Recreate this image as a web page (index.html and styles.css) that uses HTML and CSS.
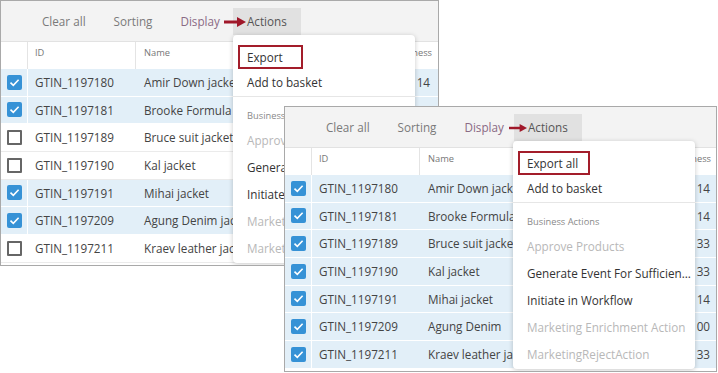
FILE: index.html
```html
<!DOCTYPE html>
<html>
  <head>
    <title>Actions menu - export</title>
    <link rel="stylesheet" href="styles.css">
  </head>
  <body>
    <div class="canvas">

      <!-- first capture: a few rows selected, "Export" -->
      <div class="shot shot-back">
        <div class="toolbar">
          <span class="tool">Clear all</span>
          <span class="tool">Sorting</span>
          <span class="tool tool-display">Display</span>
          <span class="tool tool-active">
            <svg class="pointer" viewBox="0 0 22 10"><path d="M0 5H15" stroke="#a0182a" stroke-width="3"/><path d="M13 0L22 5L13 10Z" fill="#a0182a"/></svg>
            Actions
          </span>
        </div>
        <div class="grid">
          <div class="row row-head">
            <div class="cell"></div>
            <div class="cell cell-id">ID</div>
            <div class="cell">Name</div>
            <div class="cell cell-num">Completeness</div>
          </div>
          <div class="row row-sel">
            <div class="cell cell-check"><span class="check check-on"><svg viewBox="0 0 15 15"><path d="M3.5 7.6L6.3 10.3L11.6 4.8"/></svg></span></div>
            <div class="cell cell-id">GTIN_1197180</div>
            <div class="cell">Amir Down jacket</div>
            <div class="cell cell-num">14</div>
          </div>
          <div class="row row-sel">
            <div class="cell cell-check"><span class="check check-on"><svg viewBox="0 0 15 15"><path d="M3.5 7.6L6.3 10.3L11.6 4.8"/></svg></span></div>
            <div class="cell cell-id">GTIN_1197181</div>
            <div class="cell">Brooke Formula Ice jacket</div>
            <div class="cell cell-num">14</div>
          </div>
          <div class="row">
            <div class="cell cell-check"><span class="check"></span></div>
            <div class="cell cell-id">GTIN_1197189</div>
            <div class="cell">Bruce suit jacket</div>
            <div class="cell cell-num">33</div>
          </div>
          <div class="row">
            <div class="cell cell-check"><span class="check"></span></div>
            <div class="cell cell-id">GTIN_1197190</div>
            <div class="cell">Kal jacket</div>
            <div class="cell cell-num">33</div>
          </div>
          <div class="row row-sel">
            <div class="cell cell-check"><span class="check check-on"><svg viewBox="0 0 15 15"><path d="M3.5 7.6L6.3 10.3L11.6 4.8"/></svg></span></div>
            <div class="cell cell-id">GTIN_1197191</div>
            <div class="cell">Mihai jacket</div>
            <div class="cell cell-num">14</div>
          </div>
          <div class="row row-sel">
            <div class="cell cell-check"><span class="check check-on"><svg viewBox="0 0 15 15"><path d="M3.5 7.6L6.3 10.3L11.6 4.8"/></svg></span></div>
            <div class="cell cell-id">GTIN_1197209</div>
            <div class="cell">Agung Denim jacket</div>
            <div class="cell cell-num">00</div>
          </div>
          <div class="row">
            <div class="cell cell-check"><span class="check"></span></div>
            <div class="cell cell-id">GTIN_1197211</div>
            <div class="cell">Kraev leather jacket</div>
            <div class="cell cell-num">33</div>
          </div>
        </div>
        <div class="menu">
          <div class="menu-item"><span class="callout">Export</span></div>
          <div class="menu-item">Add to basket</div>
          <div class="menu-sep"></div>
          <div class="menu-group">Business Actions</div>
          <div class="menu-item is-disabled">Approve Products</div>
          <div class="menu-item">Generate Event For Sufficient Data</div>
          <div class="menu-item">Initiate in Workflow</div>
          <div class="menu-item is-disabled">Marketing Enrichment Action</div>
          <div class="menu-item is-disabled">MarketingRejectAction</div>
        </div>
      </div>

      <!-- second capture: everything selected, "Export all" -->
      <div class="shot shot-front">
        <div class="toolbar">
          <span class="tool">Clear all</span>
          <span class="tool">Sorting</span>
          <span class="tool tool-display">Display</span>
          <span class="tool tool-active">
            <svg class="pointer" viewBox="0 0 22 10"><path d="M0 5H15" stroke="#a0182a" stroke-width="3"/><path d="M13 0L22 5L13 10Z" fill="#a0182a"/></svg>
            Actions
          </span>
        </div>
        <div class="grid">
          <div class="row row-head">
            <div class="cell"></div>
            <div class="cell cell-id">ID</div>
            <div class="cell">Name</div>
            <div class="cell cell-num">Completeness</div>
          </div>
          <div class="row row-sel">
            <div class="cell cell-check"><span class="check check-on"><svg viewBox="0 0 15 15"><path d="M3.5 7.6L6.3 10.3L11.6 4.8"/></svg></span></div>
            <div class="cell cell-id">GTIN_1197180</div>
            <div class="cell">Amir Down jacket</div>
            <div class="cell cell-num">14</div>
          </div>
          <div class="row row-sel">
            <div class="cell cell-check"><span class="check check-on"><svg viewBox="0 0 15 15"><path d="M3.5 7.6L6.3 10.3L11.6 4.8"/></svg></span></div>
            <div class="cell cell-id">GTIN_1197181</div>
            <div class="cell">Brooke Formula Ice jacket</div>
            <div class="cell cell-num">14</div>
          </div>
          <div class="row row-sel">
            <div class="cell cell-check"><span class="check check-on"><svg viewBox="0 0 15 15"><path d="M3.5 7.6L6.3 10.3L11.6 4.8"/></svg></span></div>
            <div class="cell cell-id">GTIN_1197189</div>
            <div class="cell">Bruce suit jacket</div>
            <div class="cell cell-num">33</div>
          </div>
          <div class="row row-sel">
            <div class="cell cell-check"><span class="check check-on"><svg viewBox="0 0 15 15"><path d="M3.5 7.6L6.3 10.3L11.6 4.8"/></svg></span></div>
            <div class="cell cell-id">GTIN_1197190</div>
            <div class="cell">Kal jacket</div>
            <div class="cell cell-num">33</div>
          </div>
          <div class="row row-sel">
            <div class="cell cell-check"><span class="check check-on"><svg viewBox="0 0 15 15"><path d="M3.5 7.6L6.3 10.3L11.6 4.8"/></svg></span></div>
            <div class="cell cell-id">GTIN_1197191</div>
            <div class="cell">Mihai jacket</div>
            <div class="cell cell-num">14</div>
          </div>
          <div class="row row-sel">
            <div class="cell cell-check"><span class="check check-on"><svg viewBox="0 0 15 15"><path d="M3.5 7.6L6.3 10.3L11.6 4.8"/></svg></span></div>
            <div class="cell cell-id">GTIN_1197209</div>
            <div class="cell">Agung Denim</div>
            <div class="cell cell-num">00</div>
          </div>
          <div class="row row-sel">
            <div class="cell cell-check"><span class="check check-on"><svg viewBox="0 0 15 15"><path d="M3.5 7.6L6.3 10.3L11.6 4.8"/></svg></span></div>
            <div class="cell cell-id">GTIN_1197211</div>
            <div class="cell">Kraev leather jacket</div>
            <div class="cell cell-num">33</div>
          </div>
        </div>
        <div class="menu">
          <div class="menu-item"><span class="callout">Export all</span></div>
          <div class="menu-item">Add to basket</div>
          <div class="menu-sep"></div>
          <div class="menu-group">Business Actions</div>
          <div class="menu-item is-disabled">Approve Products</div>
          <div class="menu-item">Generate Event For Sufficient Data</div>
          <div class="menu-item">Initiate in Workflow</div>
          <div class="menu-item is-disabled">Marketing Enrichment Action</div>
          <div class="menu-item is-disabled">MarketingRejectAction</div>
        </div>
      </div>

    </div>
  </body>
</html>
```

FILE: styles.css
```css
body {
  margin: 0;
  background: #FFF;
  color: #444;
  font-family: "Open Sans", "Noto Sans", Arial, sans-serif;
}

.canvas {
  position: relative;
  width: 718px;
  height: 373px;
}

/* each capture is a little window laid on the page */
.shot {
  position: absolute;
  box-sizing: border-box;
  height: 266px;
  border: 1px solid #A9A9A9;
  background: #FFF;
  overflow: hidden;
}

.shot-back {
  left: 0;
  top: 0;
  width: 439px;
}

.shot-front {
  left: 284px;
  top: 106px;
  width: 433px;
}

.toolbar {
  display: flex;
  align-items: flex-start;
  box-sizing: border-box;
  height: 41px;
  padding: 7px 0 0 27px;
  background: #F3F3F3;
  border-bottom: 1px solid #E2E2E2;
}

.tool {
  height: 27px;
  padding: 0 14px;
  line-height: 27px;
  font-size: 11.7px;
  color: #7A7A7A;
  white-space: nowrap;
}

.tool-display {
  color: #8A6A84;
}

.tool-active {
  position: relative;
  background: #E1E1E1;
  color: #555;
}

.shot-back .tool-active {
  margin-left: -1px;
}

.shot-front .tool-active {
  margin-left: -4px;
}

.pointer {
  position: absolute;
  left: -9px;
  top: 9px;
  width: 22px;
  height: 10px;
}

.shot-front .pointer {
  left: -5px;
  width: 18px;
}

.row {
  display: grid;
  grid-template-columns: 27px 108px 1fr 90px;
  box-sizing: border-box;
  height: 27.67px;
  border-bottom: 1px solid #EBEBEB;
}

.row-sel {
  background: #E2EFF8;
  border-bottom-color: #FFF;
}

.row-head {
  height: 27px;
  border-bottom: none;
}

.cell {
  overflow: hidden;
  padding-left: 8px;
  line-height: 26.67px;
  font-size: 11.7px;
  white-space: nowrap;
}

.cell-id {
  padding-left: 7px;
}

.row-head .cell {
  padding-top: 4px;
  line-height: 13px;
  font-size: 9.3px;
  color: #777;
  border-right: 1px solid #E4E4E4;
}

.cell-check {
  display: flex;
  align-items: center;
  justify-content: center;
  padding: 0;
  border-right: 1px solid #FFF;
}

.cell-num {
  padding: 0 8px 0 0;
  text-align: right;
}

.row-head .cell-num {
  padding: 4px 6px 0 0;
  border-right: none;
}

.shot-front .cell-num {
  padding-right: 6px;
}

.shot-front .row-head .cell-num {
  padding-right: 5px;
}

.check {
  display: block;
  box-sizing: border-box;
  width: 15px;
  height: 15px;
  border: 2px solid #666;
  border-radius: 1px;
  background: #FFF;
}

.check-on {
  border: none;
  border-radius: 2px;
  background: #3692D6;
}

.check svg {
  display: block;
  width: 15px;
  height: 15px;
  fill: none;
  stroke: #FFF;
  stroke-width: 1.6;
}

/* dropdown from the Actions button */
.menu {
  position: absolute;
  top: 34px;
  width: 182px;
  padding: 7px 0 1px;
  background: #FFF;
  border-radius: 4px;
  box-shadow: 0 1px 5px rgba(0, 0, 0, 0.22);
}

.shot-back .menu {
  left: 232px;
}

.shot-front .menu {
  left: 228px;
}

.menu-item {
  height: 27px;
  padding: 0 2px 0 14px;
  line-height: 27px;
  font-size: 11.7px;
  color: #333;
  white-space: nowrap;
  overflow: hidden;
  text-overflow: ellipsis;
}

.menu-item.is-disabled {
  color: #B8B8B8;
}

.menu-sep {
  border-top: 1px solid #E6E6E6;
}

.menu-group {
  padding: 12px 14px 5px;
  line-height: 13px;
  font-size: 9.3px;
  color: #8A8A8A;
}

.callout {
  display: inline-block;
  box-sizing: border-box;
  margin-left: -9px;
  padding: 0 7px;
  line-height: 20px;
  vertical-align: middle;
  border: 2px solid #A31D2A;
}

.shot-back .callout {
  width: 65px;
}

.shot-front .callout {
  width: 72px;
}
```
